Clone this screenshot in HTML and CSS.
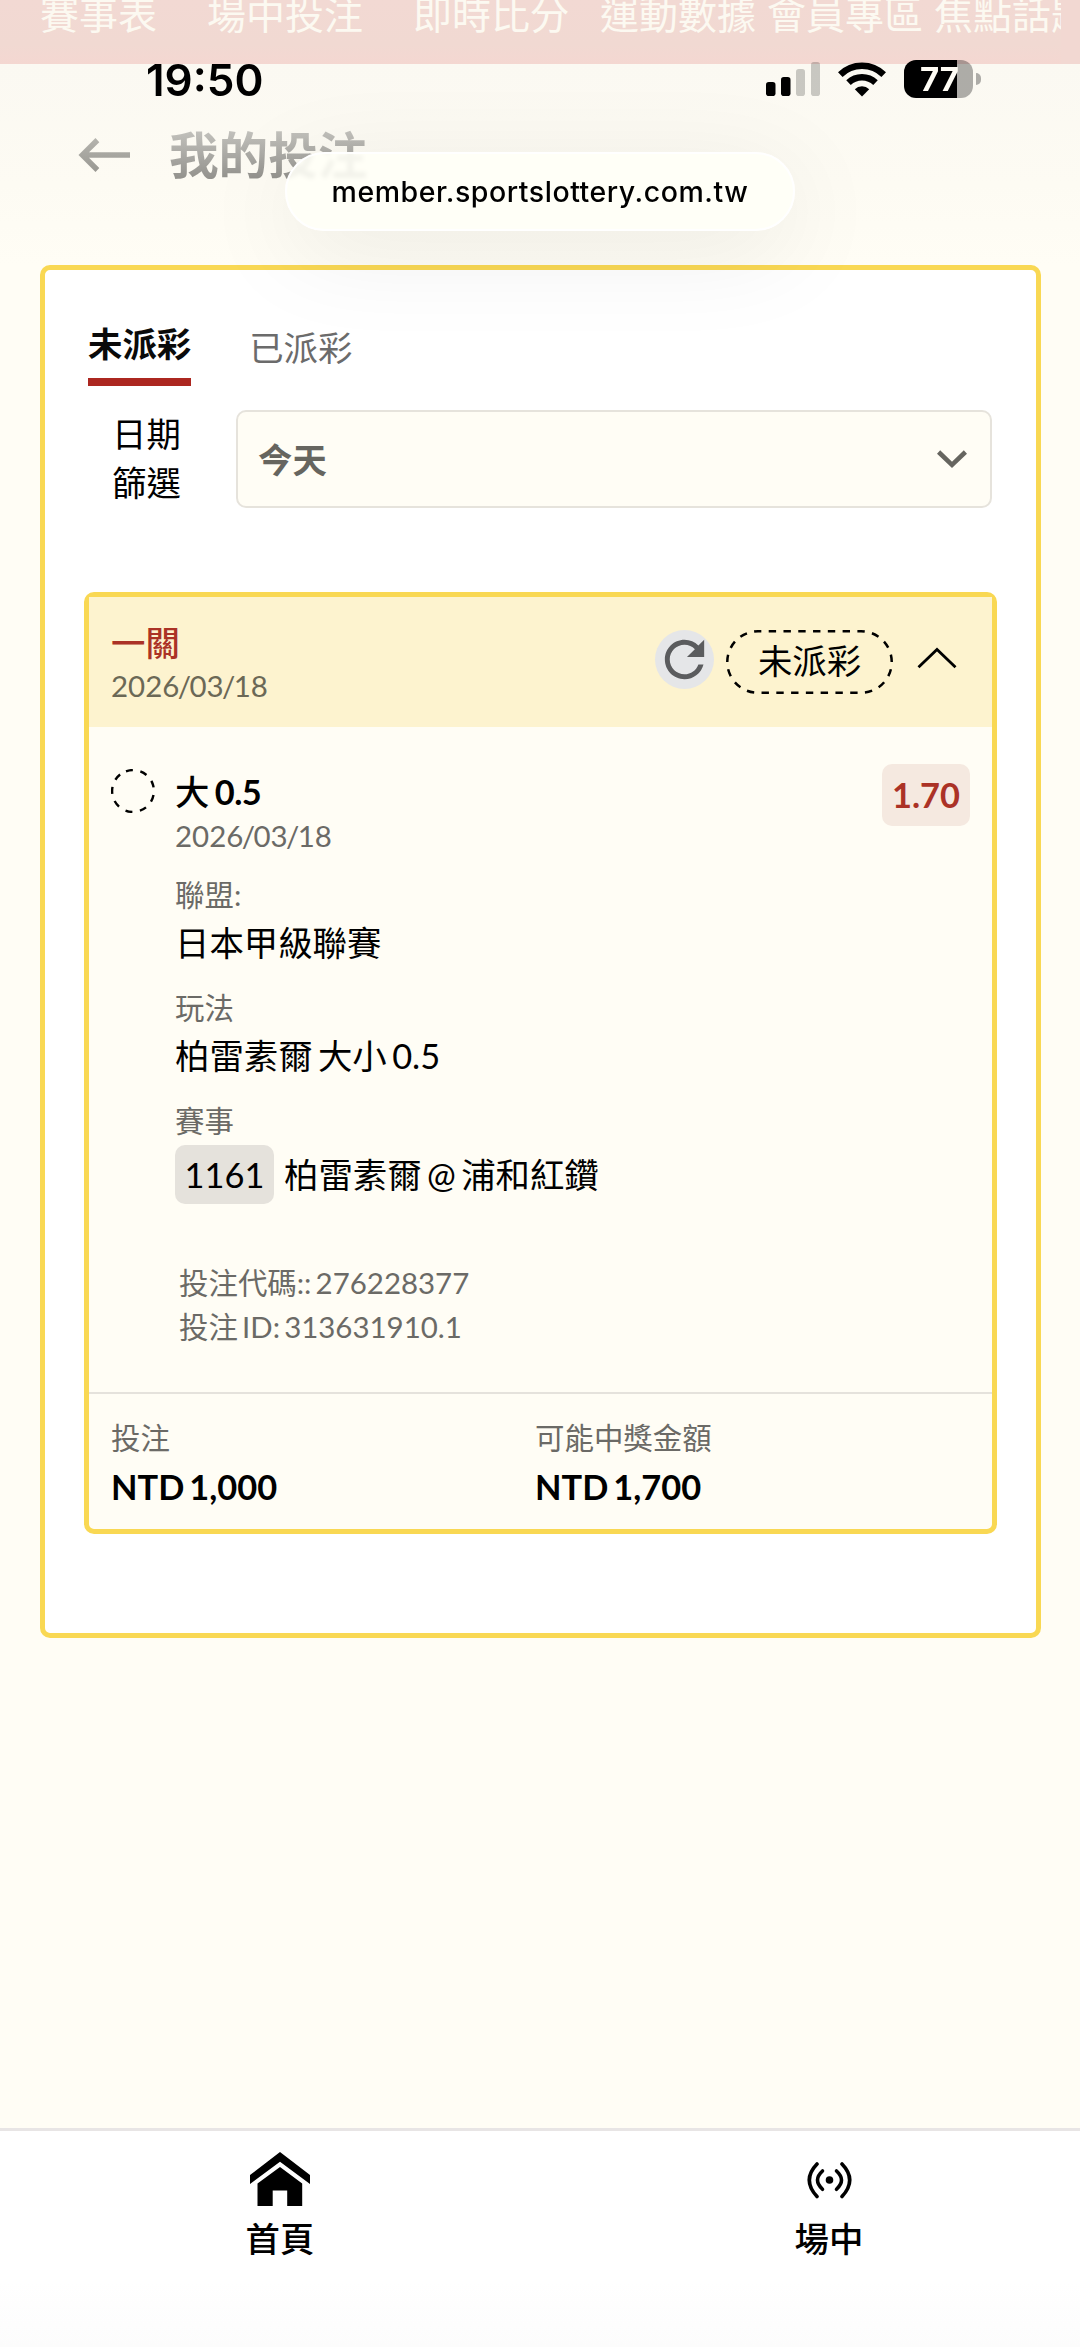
FILE: index.html
```html
<!DOCTYPE html>
<html lang="zh-Hant-TW">
<head>
<meta charset="utf-8">
<meta name="viewport" content="width=device-width">
<title>我的投注</title>
<link rel="stylesheet" href="styles.css">
</head>
<body>
<div class="screen">
  <nav class="site-nav">
    <span>賽事表</span><span>場中投注</span><span>即時比分</span><span>運動數據</span><span>會員專區</span><span>焦點話題</span>
  </nav>

  <header class="page-head">
    <svg class="back" width="54" height="40" viewBox="0 0 54 40">
      <defs><linearGradient id="fade" x1="0" y1="0" x2="0" y2="1"><stop offset="0" stop-color="#b5b4ae"/><stop offset="1" stop-color="#999892"/></linearGradient></defs>
      <path fill="url(#fade)" d="M0.5 20 17.5 3 21.3 7.2 11 17.2H52v5.6H11L21.3 33 17.500 37z"/>
    </svg>
    <h1>我的投注</h1>
  </header>

  <div class="status-bar">
    <span class="clock">19:50</span>
    <svg class="signal" width="54" height="36" viewBox="0 0 54 36">
      <rect x="0" y="21" width="9.500" height="14" rx="2.800"/>
      <rect x="15" y="16" width="9.500" height="19" rx="2.800"/>
      <rect x="30" y="8" width="9" height="27" rx="2.800" opacity=".2"/>
      <rect x="45" y="1" width="9" height="34" rx="2.800" opacity=".2"/>
    </svg>
    <svg class="wifi" width="48" height="36" viewBox="0 0 48 36">
      <g fill="none" stroke="#000" stroke-width="6.500">
        <path d="M2.300 13.600A31 31 0 0 1 45.700 13.600"/>
        <path d="M10.500 21.600A19.500 19.500 0 0 1 37.500 21.600"/>
      </g>
      <path d="M24 35.500 16.800 28.300A10.200 10.200 0 0 1 31.200 28.300z"/>
    </svg>
    <div class="battery"><span>77</span></div>
    <i class="battery-tip"></i>
  </div>

  <div class="address">member.sportslottery.com.tw</div>

  <main class="panel">
    <div class="tabs">
      <span class="tab active">未派彩</span>
      <span class="tab">已派彩</span>
    </div>
    <div class="filter">
      <span class="filter-label">日期篩選</span>
      <div class="select">
        <span>今天</span>
        <svg width="30" height="18" viewBox="0 0 30 18"><path d="M1.600 2 15 14.800 28.400 2" fill="none" stroke="#66655f" stroke-width="4.600"/></svg>
      </div>
    </div>

    <section class="ticket">
      <div class="ticket-head">
        <div>
          <div class="kind">一關</div>
          <div class="date">2026<i>/</i>03<i>/</i>18</div>
        </div>
        <div class="actions">
          <span class="refresh"><svg width="59" height="59" viewBox="0 0 24 24"><path fill="#5b5c5e" d="M17.650 6.350C16.200 4.900 14.210 4 12 4c-4.420 0-7.990 3.580-7.990 8s3.570 8 7.990 8c3.730 0 6.840-2.550 7.730-6h-2.080c-.82 2.330-3.040 4-5.650 4-3.310 0-6-2.690-6-6s2.690-6 6-6c1.660 0 3.140.69 4.220 1.780L13 11h7V4l-2.350 2.350z"/></svg></span>
          <span class="state">
            <svg class="state-ring" width="167" height="64"><rect x="1.250" y="1.250" width="164.500" height="61.500" rx="30.750" fill="none" stroke="#000" stroke-width="2.500" stroke-dasharray="7.400 7.380" stroke-dashoffset="-10.700"/></svg>
            未派彩
          </span>
          <svg class="collapse" width="40" height="22" viewBox="0 0 40 22"><path d="M1.500 20.300 20 2.500 38.500 20.300" fill="none" stroke="#000" stroke-width="2.800"/></svg>
        </div>
      </div>

      <div class="bet">
        <svg class="pending" width="44" height="44" viewBox="0 0 44 44"><circle cx="22" cy="22" r="20.900" fill="none" stroke="#000" stroke-width="2.400" stroke-dasharray="7 7.590" transform="rotate(-109.600 22 22)"/></svg>
        <div class="detail">
          <div class="pick">大 <b>0.5</b></div>
          <div class="date">2026<i>/</i>03<i>/</i>18</div>
          <dl>
            <dt>聯盟:</dt><dd>日本甲級聯賽</dd>
            <dt>玩法</dt><dd>柏雷素爾 大小 0.5</dd>
            <dt>賽事</dt><dd class="match"><span class="chip">1161</span>柏雷素爾 @ 浦和紅鑽</dd>
          </dl>
          <div class="codes">
            <div>投注代碼:: 276228377</div>
            <div>投注 ID: 313631910.1</div>
          </div>
        </div>
        <span class="odds">1.70</span>
      </div>

      <div class="totals">
        <div><div class="label">投注</div><div class="amount">NTD 1,000</div></div>
        <div><div class="label">可能中獎金額</div><div class="amount">NTD 1,700</div></div>
      </div>
    </section>
  </main>

  <footer class="tabbar">
    <a class="item">
      <svg width="60" height="55" viewBox="0 0 60 55">
        <path d="M0 23 30 0 60 23V32L30 9.700 0 32z"/>
        <path d="M7.500 31.500 30 15 52.200 31.500V54H37.200V38.500H22.700V54H7.500z"/>
      </svg>
      <span>首頁</span>
    </a>
    <a class="item">
      <svg width="60" height="55" viewBox="0 0 60 55">
        <circle cx="30.500" cy="28" r="3.800"/>
        <g fill="none" stroke="#000" stroke-width="3.600" stroke-linecap="round">
          <path d="M23.500 19Q13.500 28 23.500 37.300M37.500 19Q47.500 28 37.500 37.300"/>
          <path d="M18 12Q2.600 28 18 44.500M43 12Q58.400 28 43 44.500"/>
        </g>
      </svg>
      <span>場中</span>
    </a>
  </footer>
</div>
</body>
</html>
```

FILE: styles.css
```css
* { box-sizing: border-box; }

body {
  margin: 0;
  background: #fffdf5;
  color: #000;
  font-family: Lato, "Noto Sans CJK TC", sans-serif;
}

.screen {
  position: relative;
  display: flex;
  flex-direction: column;
  width: 1080px;
  height: 2347px;
  overflow: hidden;
}

/* Site navigation, scrolled partly out of view */
.site-nav {
  display: flex;
  flex: none;
  height: 64px;
  width: 1080px;
  padding-left: 40px;
  border-right: 19px solid #f2d8d2;
  overflow: hidden;
  background: linear-gradient(#f2d9d3, #f1d9d2 70%, #f4d7d1);
  color: #fcf9f1;
  font-size: 39px;
  font-weight: 400;
  line-height: 28px;
  white-space: nowrap;
}
.site-nav span { flex: none; width: 167px; }
.site-nav span:nth-child(2) { width: 206px; }
.site-nav span:nth-child(3) { width: 187px; }

.page-head {
  display: flex;
  flex: none;
  align-items: flex-start;
  height: 201px;
  padding: 71px 0 0 78px;
  background: linear-gradient(#fbf9f2, #fdfbf3 60%, #fffdf5);
}
.back { flex: none; }
.page-head h1 {
  margin: -14px 0 0 37px;
  font-size: 49.600px;
  font-weight: 700;
  line-height: 68px;
  background: linear-gradient(#c1c0bb 16%, #92918c 86%);
  -webkit-background-clip: text;
  background-clip: text;
  color: transparent;
}

/* Device status bar, laid over the page */
.status-bar {
  position: absolute;
  z-index: 3;
  top: 60px;
  left: 146px;
  display: flex;
  align-items: flex-start;
}
.clock {
  width: 620px;
  font: 600 44px/40px Inter, sans-serif;
}
.signal { margin-top: 1px; }
.wifi { margin: 1px 18px 0; }
.battery {
  width: 69px;
  height: 38px;
  border-radius: 12px;
  background: linear-gradient(90deg, #000 53px, rgba(0, 0, 0, .31) 53px);
  color: #fffdf5;
  font: 700 33px/38px Inter, sans-serif;
  padding-left: 16px;
}
.battery-tip {
  width: 5px;
  height: 12px;
  margin: 13px 0 0 3px;
  border-radius: 0 6px 6px 0;
  background: rgba(0, 0, 0, .31);
}

.address {
  position: absolute;
  z-index: 2;
  top: 152px;
  left: 285px;
  width: 510px;
  height: 79px;
  border: 2px solid #fff;
  border-radius: 40px;
  background: rgba(255, 255, 247, .88);
  backdrop-filter: blur(2px);
  box-shadow: 0 20px 100px rgba(0, 0, 0, .08);
  font: 500 28.500px/76px Inter, sans-serif;
  letter-spacing: .54px;
  text-align: center;
}

.panel {
  flex: none;
  height: 1373px;
  margin: 0 39px 0 40px;
  padding: 49px 39px 0;
  border: 5px solid #f9d853;
  border-radius: 10px;
  background: #fff;
  font-size: 34.400px;
  word-spacing: -3.400px;
}

.tabs {
  display: flex;
  gap: 58px;
  height: 67px;
  padding-left: 4px;
  line-height: 49px;
}
.tab { padding-top: 4px; color: #6b6b6b; }
.tab.active {
  padding: 0;
  border-bottom: 8px solid #ac2720;
  color: #0a0a0a;
  font-weight: 700;
}

.filter {
  display: flex;
  align-items: center;
  gap: 55px;
  height: 98px;
  margin: 24px 5px 84px 28px;
}
.filter-label { width: 69px; margin-top: -2px; line-height: 49px; }
.select {
  display: flex;
  flex: 1;
  align-items: center;
  justify-content: space-between;
  height: 98px;
  padding: 0 23px 0 20px;
  border: 2px solid #e6e3dc;
  border-radius: 10px;
  background: #fffdf5;
  color: #66655f;
  font-weight: 700;
}
.select span { margin-top: -3px; }

.ticket {
  height: 942px;
  border: 5px solid #f9d853;
  border-radius: 10px;
  background: #fffdf5;
}
.ticket-head {
  display: flex;
  justify-content: space-between;
  height: 130px;
  padding: 24px 39px 0 22px;
  background: #fdf3cf;
}
.kind { color: #ab3226; font-weight: 500; line-height: 43px; }
.date { color: #6b6a66; font-size: 29.450px; line-height: 44px; }
.date i { margin: 0 -1.600px; font-style: normal; }
.ticket-head .date { color: #6b6856; }
.actions { display: flex; align-items: flex-start; padding-top: 9px; }
.refresh {
  width: 59px;
  height: 59px;
  margin-right: 12px;
  border-radius: 50%;
  background: #e5e6e8;
}
.refresh svg { display: block; }
.state {
  position: relative;
  width: 167px;
  height: 64px;
  line-height: 62px;
  text-align: center;
}
.state-ring { position: absolute; inset: 0; }
.collapse { margin: 17px -4px 0 24px; }

.bet {
  display: flex;
  height: 665px;
  padding: 37px 22px 0;
}
.pending { flex: none; margin: 5px 20px 0 0; }
.detail { flex: 1; padding-top: 6px; }
.pick { font-weight: 500; line-height: 44px; }
.pick b { font-weight: 700; letter-spacing: -.5px; }
dl { margin: 15px 0 0; }
dt { color: #6b6a66; font-size: 29.450px; line-height: 44px; }
dd { height: 49px; margin: 1px 0 19px; line-height: 49px; }
dd.match { display: flex; align-items: center; height: 59px; margin-top: 2px; line-height: 57px; }
.chip {
  width: 99px;
  height: 59px;
  margin-right: 10px;
  border-radius: 10px;
  background: #e5e2dc;
  line-height: 60px;
  text-align: center;
}
.codes {
  margin-top: 57px;
  padding-left: 4px;
  color: #6b6a66;
  font-size: 29.450px;
  line-height: 44px;
}
.odds {
  width: 88px;
  height: 62px;
  border-radius: 10px;
  background: #f5e9e0;
  color: #ab3226;
  font-weight: 700;
  line-height: 62px;
  text-align: center;
}

.totals {
  display: grid;
  grid-template-columns: 424px 1fr;
  height: 137px;
  padding: 22px 0 0 22px;
  border-top: 2px solid #e5e2dc;
}
.label { color: #6b6a66; font-size: 29.450px; line-height: 44px; }
.amount { margin-top: 2px; font-weight: 700; line-height: 49px; }

.tabbar {
  display: grid;
  flex: none;
  grid-template-columns: 560px 538px;
  height: 219px;
  margin-top: auto;
  padding-top: 21px;
  border-top: 3px solid #e8e5e5;
  background: linear-gradient(#fff 70%, #fcfcfc);
  font-size: 34.400px;
  font-weight: 500;
}
.item {
  display: flex;
  flex-direction: column;
  align-items: center;
  line-height: 49px;
}
.item span { margin-top: 7px; }
```
